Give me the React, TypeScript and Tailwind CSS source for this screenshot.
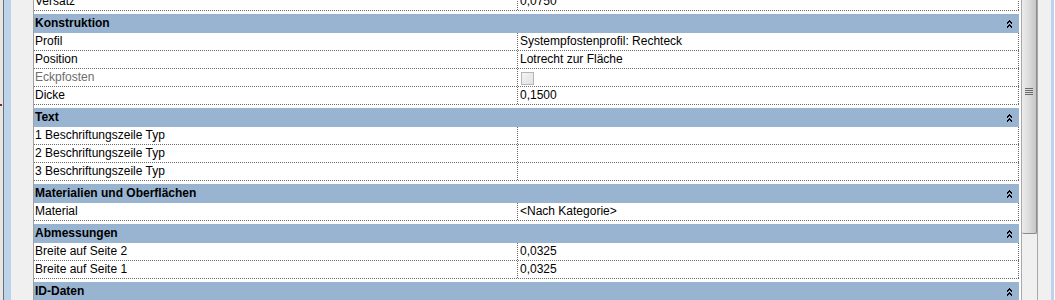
import React from 'react';

type Row = { label: string; value?: string; muted?: boolean; checkbox?: boolean };
type Group = { title: string; rows: Row[] };

const groups: Group[] = [
  {
    title: 'Konstruktion',
    rows: [
      { label: 'Profil', value: 'Systempfostenprofil: Rechteck' },
      { label: 'Position', value: 'Lotrecht zur Fläche' },
      { label: 'Eckpfosten', muted: true, checkbox: true },
      { label: 'Dicke', value: '0,1500' },
    ],
  },
  {
    title: 'Text',
    rows: [
      { label: '1 Beschriftungszeile Typ' },
      { label: '2 Beschriftungszeile Typ' },
      { label: '3 Beschriftungszeile Typ' },
    ],
  },
  {
    title: 'Materialien und Oberflächen',
    rows: [{ label: 'Material', value: '<Nach Kategorie>' }],
  },
  {
    title: 'Abmessungen',
    rows: [
      { label: 'Breite auf Seite 2', value: '0,0325' },
      { label: 'Breite auf Seite 1', value: '0,0325' },
    ],
  },
  { title: 'ID-Daten', rows: [] },
];

// pixel-art double chevron (collapse)
const chevronPixels = [
  '..X..',
  '.XXX.',
  'XX.XX',
  'X...X',
  '..X..',
  '.XXX.',
  'XX.XX',
  'X...X',
];

function CollapseIcon() {
  return (
    <svg width="5" height="8" viewBox="0 0 5 8" shapeRendering="crispEdges">
      {chevronPixels.map((line, y) =>
        line.split('').map((c, x) =>
          c === 'X' ? <rect key={`${x}-${y}`} x={x} y={y} width="1" height="1" fill="#000" /> : null
        )
      )}
    </svg>
  );
}

function PropRow({ row }: { row: Row }) {
  return (
    <div className="flex h-[18px] border-b border-dotted border-[#6b6b6b]">
      <div
        className={`w-[484px] shrink-0 border-r border-dotted border-[#6b6b6b] pl-[1px] leading-[17px] ${
          row.muted ? 'text-[#6d6d6d]' : 'text-black'
        }`}
      >
        {row.label}
      </div>
      <div className="flex-1 border-r border-dotted border-[#6b6b6b] pl-[2px] leading-[17px] text-black">
        {row.checkbox ? (
          <div className="mt-[3px] ml-[1px] h-[13px] w-[13px] border border-[#b5b5b5] bg-gradient-to-br from-[#f4f4f4] to-[#e2e2e2]" />
        ) : (
          row.value
        )}
      </div>
    </div>
  );
}

function GroupHeader({ title }: { title: string }) {
  return (
    <div className="flex h-[19px] items-center justify-between bg-[#99b4d1] pl-[1px] pr-[7px] font-bold text-black">
      <span className="leading-[19px]">{title}</span>
      <CollapseIcon />
    </div>
  );
}

export default function App() {
  return (
    <div
      className="flex h-[300px] w-[1055px] overflow-hidden bg-white text-[12px]"
      style={{ fontFamily: '"Liberation Sans", Arial, sans-serif' }}
    >
      {/* left panel edge */}
      <div className="w-[3px] bg-[#e6e6e6] pt-[104px]">
        <div className="h-[2px] w-[2px] bg-[#7a2a2a]" />
      </div>
      <div className="w-px bg-[#6e6e6e]" />
      <div className="w-[7px] bg-[#bcd3ea]" />
      <div className="w-[22px] bg-[#f0f0f0]" />
      <div className="w-px bg-[#a0a0a0]" />

      {/* property grid */}
      <div className="w-[985px] shrink-0">
        <div className="mt-[-7px]">
          <PropRow row={{ label: 'Versatz', value: '0,0750' }} />
          {groups.map((g) => (
            <div key={g.title}>
              <div className="h-[3px]" />
              <GroupHeader title={g.title} />
              {g.rows.map((r) => (
                <PropRow key={r.label} row={r} />
              ))}
            </div>
          ))}
        </div>
      </div>

      {/* scrollbar */}
      <div className="w-[2px] bg-white" />
      <div className="flex w-[17px] flex-col border-l border-r border-[#a8a8a8] bg-[#f0f0f0]">
        <div className="mt-[-50px] flex h-[284px] w-[15px] shrink-0 items-center justify-center rounded-b-[2px] border-r border-b border-[#8a8a8a] bg-gradient-to-r from-[#ececec] via-[#dcdcdc] to-[#c6c6c6]">
          <div className="flex flex-col gap-[1px]">
            <div className="h-px w-[8px] bg-[#6a6a6a]" />
            <div className="h-px w-[8px] bg-[#6a6a6a]" />
            <div className="h-px w-[8px] bg-[#6a6a6a]" />
            <div className="h-px w-[8px] bg-[#6a6a6a]" />
          </div>
        </div>
      </div>
      <div className="w-[13px] bg-[#f0f0f0]" />
      <div className="w-[3px] bg-[#bcd3ea]" />
    </div>
  );
}
